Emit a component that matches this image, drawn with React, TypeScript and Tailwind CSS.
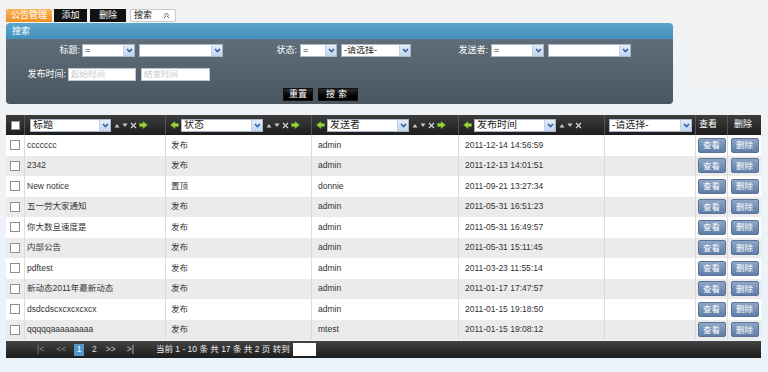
import React from "react";

const F = { fontFamily: '"Liberation Sans", "Noto Sans CJK SC", sans-serif' };

function Chevron() {
  return (
    <svg width="7" height="5" viewBox="0 0 7 5">
      <path d="M1 1 L3.5 3.5 L6 1" stroke="#2f5fa8" strokeWidth="1.6" fill="none" />
    </svg>
  );
}

function Select({ w, text, h = 13, fs = "text-[9px]" }: { w: number; text?: string; h?: number; fs?: string }) {
  return (
    <div
      className={`flex items-center bg-white border border-[#a9b8c8] ${fs} text-[#222]`}
      style={{ width: w, height: h }}
    >
      <span className="flex-1 pl-[2px] leading-none whitespace-nowrap overflow-hidden">{text}</span>
      <span className="h-full w-[11px] flex items-center justify-center bg-gradient-to-b from-[#e4edf8] to-[#c3d4ea] border-l border-[#c5d3e3]">
        <Chevron />
      </span>
    </div>
  );
}

function Input({ w, ph }: { w: number; ph: string }) {
  return (
    <div
      className="h-[13px] bg-white border border-[#bfc7cf] text-[8.5px] text-[#c8c8c8] pl-[2px] flex items-center leading-none"
      style={{ width: w }}
    >
      {ph}
    </div>
  );
}

function GreenRight() {
  return (
    <svg width="9" height="8" viewBox="0 0 9 8">
      <path d="M0.5 2.5 H4 V0.5 L8.5 4 L4 7.5 V5.5 H0.5 Z" fill="#9ed23a" stroke="#6aa51e" strokeWidth="0.6" />
    </svg>
  );
}
function GreenLeft() {
  return (
    <svg width="9" height="8" viewBox="0 0 9 8">
      <path d="M8.5 2.5 H5 V0.5 L0.5 4 L5 7.5 V5.5 H8.5 Z" fill="#9ed23a" stroke="#6aa51e" strokeWidth="0.6" />
    </svg>
  );
}

function SortIcons({ right = true }: { right?: boolean }) {
  return (
    <div className="flex items-center gap-[2px] ml-[3px]">
      <svg width="6" height="5" viewBox="0 0 6 5"><path d="M0.5 4.5 L3 1 L5.5 4.5 Z" fill="#c8c8c8" /></svg>
      <svg width="6" height="5" viewBox="0 0 6 5"><path d="M0.5 0.5 L3 4 L5.5 0.5 Z" fill="#c8c8c8" /></svg>
      <svg width="7" height="7" viewBox="0 0 7 7"><path d="M1 1 L6 6 M6 1 L1 6" stroke="#dcdcdc" strokeWidth="1.1" /></svg>
      {right && <GreenRight />}
    </div>
  );
}

const rows = [
  ["ccccccc", "发布", "admin", "2011-12-14 14:56:59"],
  ["2342", "发布", "admin", "2011-12-13 14:01:51"],
  ["New notice", "置顶", "donnie", "2011-09-21 13:27:34"],
  ["五一劳大家通知", "发布", "admin", "2011-05-31 16:51:23"],
  ["你大数旦速度是", "发布", "admin", "2011-05-31 16:49:57"],
  ["内部公告", "发布", "admin", "2011-05-31 15:11:45"],
  ["pdftest", "发布", "admin", "2011-03-23 11:55:14"],
  ["新动态2011年最新动态", "发布", "admin", "2011-01-17 17:47:57"],
  ["dsdcdscxcxcxcxcx", "发布", "admin", "2011-01-15 19:18:50"],
  ["qqqqqaaaaaaaaa", "发布", "mtest", "2011-01-15 19:08:12"],
];

const cols = "grid grid-cols-[19px_141px_146px_147px_146px_91px_32px_33px]";

function RowBtn({ t }: { t: string }) {
  return (
    <div className="w-[28px] h-[15px] rounded-[2px] bg-gradient-to-b from-[#8fa6c6] to-[#5f7ea8] border border-[#5a7398] text-white text-[8.5px] flex items-center justify-center leading-none">
      {t}
    </div>
  );
}

export default function App() {
  return (
    <div className="w-[768px] h-[372px] bg-gradient-to-b from-[#f2f2f2] to-[#e9f3fb] overflow-hidden" style={F}>
      {/* tabs */}
      <div className="flex items-end pt-[8px] pl-[6px] h-[22px]">
        <div className="w-[46px] h-[13px] bg-gradient-to-b from-[#fbb55a] to-[#ef8f1e] text-white text-[9px] flex items-center justify-center leading-none rounded-t-[2px]">公告管理</div>
        <div className="ml-[2px] w-[33px] h-[13px] bg-[#111] text-white text-[9px] flex items-center justify-center leading-none">添加</div>
        <div className="ml-[3px] w-[36px] h-[13px] bg-[#111] text-white text-[9px] flex items-center justify-center leading-none">删除</div>
        <div className="ml-[4px] w-[46px] h-[13px] bg-white border border-[#c9c9c9] rounded-[2px] text-[#111] text-[9px] flex items-center leading-none pl-[3px]">
          <span className="flex-1">搜索</span>
          <svg width="7" height="7" viewBox="0 0 7 7" className="mr-[5px]"><path d="M1 3.5 L3.5 1 L6 3.5 M1 6 L3.5 3.5 L6 6" stroke="#555" strokeWidth="0.9" fill="none" /></svg>
        </div>
      </div>

      {/* search panel */}
      <div className="ml-[6px] mt-[1px] w-[667px] h-[81px] rounded-[4px] overflow-hidden flex flex-col">
        <div className="h-[16px] bg-gradient-to-b from-[#5ca5cc] to-[#4490bb] text-white text-[9px] flex items-center pl-[6px] leading-none">搜索</div>
        <div className="flex-1 bg-gradient-to-b from-[#5f6e7a] to-[#4a5761] text-white text-[9px]">
          <div className="flex items-center mt-[5px] h-[13px]">
            <div className="w-[76px] text-right pr-[2px]">标题:</div>
            <Select w={53} text="=" />
            <div className="ml-[4px]"><Select w={84} text="" /></div>
            <div className="w-[77px] text-right pr-[3px]">状态:</div>
            <Select w={37} text="=" />
            <div className="ml-[4px]"><Select w={70} text="-请选择-" /></div>
            <div className="w-[80px] text-right pr-[3px]">发送者:</div>
            <Select w={53} text="=" />
            <div className="ml-[4px]"><Select w={83} text="" /></div>
          </div>
          <div className="flex items-center mt-[11px] h-[13px]">
            <div className="w-[62px] text-right pr-[2px]">发布时间:</div>
            <Input w={68} ph="起始时间" />
            <div className="ml-[5px]"><Input w={69} ph="结束时间" /></div>
          </div>
          <div className="flex items-center mt-[7px] pl-[277px] gap-[5px]">
            <div className="w-[30px] h-[13px] bg-gradient-to-b from-[#2a2a2a] to-[#000] border border-[#111] text-white text-[9px] flex items-center justify-center leading-none">重置</div>
            <div className="w-[40px] h-[13px] bg-gradient-to-b from-[#2a2a2a] to-[#000] border border-[#111] text-white text-[9px] flex items-center justify-center leading-none tracking-[3px]">搜索</div>
          </div>
        </div>
      </div>

      {/* table */}
      <div className="ml-[6px] mt-[11px] w-[755px]">
        <div className={`${cols} h-[20px] bg-gradient-to-b from-[#3d3d3d] to-[#1e1e1e] text-white text-[9px]`}>
          <div className="flex items-center justify-center border-r border-[#555]">
            <div className="w-[9px] h-[9px] bg-white border border-[#999]" />
          </div>
          <div className="flex items-center pl-[5px] border-r border-[#555]">
            <Select w={81} text="标题" fs="text-[10px]" />
            <SortIcons />
          </div>
          <div className="flex items-center pl-[4px] border-r border-[#555]">
            <GreenLeft />
            <div className="ml-[2px]"><Select w={82} text="状态" fs="text-[10px]" /></div>
            <SortIcons />
          </div>
          <div className="flex items-center pl-[4px] border-r border-[#555]">
            <GreenLeft />
            <div className="ml-[2px]"><Select w={82} text="发送者" fs="text-[10px]" /></div>
            <SortIcons />
          </div>
          <div className="flex items-center pl-[4px] border-r border-[#555]">
            <GreenLeft />
            <div className="ml-[2px]"><Select w={82} text="发布时间" fs="text-[10px]" /></div>
            <SortIcons right={false} />
          </div>
          <div className="flex items-center pl-[4px] border-r border-[#555]">
            <Select w={83} text="-请选择-" fs="text-[10px]" />
          </div>
          <div className="flex items-center pl-[3px] border-r border-[#555]">查看</div>
          <div className="flex items-center pl-[6px]">删除</div>
        </div>
        {rows.map((r, i) => (
          <div key={i} className={`${cols} h-[20.5px] text-[8.5px] text-[#333] ${i % 2 === 1 ? "bg-[#ebebeb]" : "bg-white"}`}>
            <div className="flex items-center justify-center border-r border-[#dcdcdc]">
              <div className="w-[10px] h-[10px] bg-white border border-[#8e8e8e]" />
            </div>
            <div className="flex items-center pl-[2px] border-r border-[#dcdcdc] whitespace-nowrap overflow-hidden">{r[0]}</div>
            <div className="flex items-center pl-[5px] border-r border-[#dcdcdc]">{r[1]}</div>
            <div className="flex items-center pl-[6px] border-r border-[#dcdcdc]">{r[2]}</div>
            <div className="flex items-center pl-[6px] border-r border-[#dcdcdc]">{r[3]}</div>
            <div className="border-r border-[#dcdcdc]" />
            <div className="flex items-center justify-center border-r border-[#dcdcdc]"><RowBtn t="查看" /></div>
            <div className="flex items-center justify-center"><RowBtn t="删除" /></div>
          </div>
        ))}
        <div className="h-[17px] mt-[1px] bg-gradient-to-b from-[#444] to-[#1c1c1c] flex items-center text-[8.5px] text-[#888] leading-none">
          <span className="ml-[31px]">|&lt;</span>
          <span className="ml-[12px]">&lt;&lt;</span>
          <span className="ml-[8px] w-[10px] h-[12px] bg-[#4d97c9] text-white flex items-center justify-center">1</span>
          <span className="ml-[8px] text-[#ddd]">2</span>
          <span className="ml-[9px] text-[#ccc]">&gt;&gt;</span>
          <span className="ml-[11px] text-[#ccc]">&gt;|</span>
          <span className="ml-[22px] text-[#eee] whitespace-nowrap">当前 1 - 10 条 共 17 条 共 2 页 转到</span>
          <span className="ml-[3px] w-[23px] h-[13px] bg-white" />
        </div>
      </div>
    </div>
  );
}
